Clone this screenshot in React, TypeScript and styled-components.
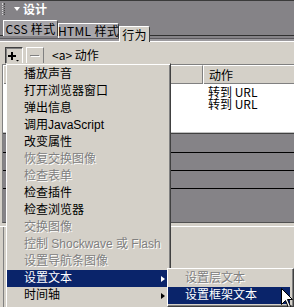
import styled, { createGlobalStyle } from 'styled-components';

type TItemState = 'normal' | 'disabled' | 'active';

interface IMenuItem {
    label: string;
    state?: TItemState;
    sub?: boolean;
}

const MENU_ITEMS: IMenuItem[] = [
    { label: '播放声音' },
    { label: '打开浏览器窗口' },
    { label: '弹出信息' },
    { label: '调用JavaScript' },
    { label: '改变属性' },
    { label: '恢复交换图像', state: 'disabled' },
    { label: '检查表单', state: 'disabled' },
    { label: '检查插件' },
    { label: '检查浏览器' },
    { label: '交换图像', state: 'disabled' },
    { label: '控制 Shockwave 或 Flash', state: 'disabled' },
    { label: '设置导航条图像', state: 'disabled' },
    { label: '设置文本', state: 'active', sub: true },
    { label: '时间轴', sub: true },
];

const SUB_ITEMS: IMenuItem[] = [
    { label: '设置层文本', state: 'disabled' },
    { label: '设置框架文本', state: 'active' },
];

const ACTIONS = ['转到 URL', '转到 URL'];

function App() {
    const renderItems = (items: IMenuItem[]) =>
        items.map(item => {
            const state = item.state || 'normal';
            return (
                <MenuItem key={item.label} $state={state}>
                    <span className="label">{item.label}</span>
                    {item.sub && <SubArrow $state={state} />}
                </MenuItem>
            );
        });

    return (
        <>
            <GlobalStyle />
            <Panel>
                <Header>
                    <TitleRow>
                        <Gripper />
                        <Caret />
                        <Title>设计</Title>
                    </TitleRow>
                    <TabRow>
                        <Tab $top={3} $width={55} $height={16}>
                            CSS 样式
                        </Tab>
                        <Tab $top={6} $width={61} $height={15}>
                            HTML 样式
                        </Tab>
                        <Tab $top={9} $width={31} $height={16} $active>
                            行为
                        </Tab>
                    </TabRow>
                </Header>

                <Toolbar>
                    <ToolButton $pressed>
                        <svg width="16" height="14" viewBox="0 0 16 14">
                            <rect x="2" y="6" width="8" height="2" fill="#000" />
                            <rect x="5" y="3" width="2" height="8" fill="#000" />
                            <path d="M10 11h3l-1.5 1.5z" fill="#000" />
                        </svg>
                    </ToolButton>
                    <ToolButton>
                        <svg width="16" height="14" viewBox="0 0 16 14">
                            <rect x="3" y="6" width="9" height="1" fill="#808080" />
                            <rect x="4" y="7" width="9" height="1" fill="#ffffff" />
                        </svg>
                    </ToolButton>
                    <TagLabel>{'<a> 动作'}</TagLabel>
                </Toolbar>

                <ListBox>
                    <HeaderRow>
                        <span className="cell first" />
                        <span className="cell">动作</span>
                    </HeaderRow>
                    <ListBody>
                        {ACTIONS.map((a, i) => (
                            <ActionRow key={i}>
                                <span />
                                <span className="action">{a}</span>
                            </ActionRow>
                        ))}
                    </ListBody>
                    <DarkArea>
                        <DarkRow />
                        <DarkRow />
                        <DarkRow />
                    </DarkArea>
                </ListBox>

                <Footer>
                    <FooterWell />
                </Footer>

                <Menu>{renderItems(MENU_ITEMS)}</Menu>
                <SubMenu>{renderItems(SUB_ITEMS)}</SubMenu>

                <Cursor width="13" height="20" viewBox="0 0 13 20">
                    <path
                        d="M0.5 0.5 L0.5 16.5 L4.5 12.5 L7.5 19.5 L9.5 18.5 L6.5 11.5 L11.5 11.5 Z"
                        fill="#fff"
                        stroke="#000"
                        strokeWidth="1"
                    />
                </Cursor>
            </Panel>
        </>
    );
}

export default App;

const GlobalStyle = createGlobalStyle`
    html, body {
        margin: 0;
        padding: 0;
        background: #d4d0c8;
    }
`;

const Panel = styled.div`
    position: relative;
    width: 294px;
    height: 307px;
    overflow: hidden;
    display: flex;
    flex-direction: column;
    background: #d4d0c8;
    font-family: "Noto Sans CJK SC", sans-serif;
    font-size: 12px;
    color: #000;
`;

const Header = styled.header`
    background: #858387;
    border-top: 1px solid #3a3a3a;
`;

const TitleRow = styled.div`
    height: 16px;
    display: flex;
    align-items: center;
    padding-left: 2px;
`;

const Gripper = styled.span`
    width: 1px;
    height: 12px;
    border-left: 1px dotted #d8d8d8;
    border-right: 1px dotted #4a4a4a;
`;

const Caret = styled.span`
    width: 0;
    height: 0;
    margin-left: 9px;
    border-left: 3.5px solid transparent;
    border-right: 3.5px solid transparent;
    border-top: 4px solid #fff;
`;

const Title = styled.span`
    margin-left: 3px;
    color: #fff;
    font-weight: bold;
    line-height: 16px;
`;

const TabRow = styled.div`
    height: 25px;
    display: flex;
    align-items: flex-start;
    padding-left: 3px;
    background: linear-gradient(
        to bottom,
        transparent 0 18px,
        #303030 18px 19px,
        #858387 19px 21px,
        #5c5a5e 21px 22px,
        #9c9a9e 22px 24px,
        #ffffff 24px 25px
    );
`;

const Tab = styled.div<{ $top: number; $width: number; $height: number; $active?: boolean }>`
    box-sizing: border-box;
    margin-top: ${p => p.$top}px;
    width: ${p => p.$width}px;
    height: ${p => p.$height}px;
    display: flex;
    align-items: center;
    justify-content: center;
    white-space: nowrap;
    line-height: 14px;
    letter-spacing: 0.3px;
    background: ${p => (p.$active ? '#d4d0c8' : '#a8a6aa')};
    border-top: 1px solid #fff;
    border-left: 1px solid #fff;
    border-right: 1px solid #404040;
    border-top-right-radius: 2px;
    color: #000;
`;

const Toolbar = styled.div`
    height: 21px;
    display: flex;
    align-items: flex-start;
    padding: 5px 0 0 5px;
    box-sizing: border-box;
`;

const ToolButton = styled.div<{ $pressed?: boolean }>`
    box-sizing: border-box;
    width: 18px;
    height: 17px;
    margin-right: 3px;
    display: flex;
    align-items: center;
    justify-content: center;
    border: 1px solid;
    border-color: ${p => (p.$pressed ? '#404040 #fff #fff #404040' : '#fff #808080 #808080 #fff')};
    box-shadow: ${p => (p.$pressed ? 'inset 1px 1px 0 #808080' : 'none')};
`;

const TagLabel = styled.span`
    margin-left: 5px;
    line-height: 16px;
    white-space: nowrap;
`;

const ListBox = styled.div`
    margin: 1px 0 0 2px;
    height: 159px;
    box-sizing: border-box;
    display: flex;
    flex-direction: column;
    border-top: 1px solid #808080;
    border-left: 1px solid #808080;
    border-bottom: 1px solid #505050;
`;

const HeaderRow = styled.div`
    height: 19px;
    box-sizing: border-box;
    display: grid;
    grid-template-columns: 200px 1fr;
    border-bottom: 1px solid #808080;

    .cell {
        line-height: 18px;
        padding-left: 5px;
        border-top: 1px solid #fff;
        border-left: 1px solid #fff;
    }

    .first {
        border-right: 1px solid #808080;
    }
`;

const ListBody = styled.div`
    height: 49px;
    padding-top: 2px;
    box-sizing: border-box;
    background: #fff;
    border-bottom: 1px solid #c0c0c0;
`;

const ActionRow = styled.div`
    display: grid;
    grid-template-columns: 200px 1fr;
    height: 12px;
    line-height: 12px;

    .action {
        padding-left: 5px;
        white-space: nowrap;
    }
`;

const DarkArea = styled.div`
    flex: 1;
    background: #858387;
    border-top: 1px solid #404040;
    padding-top: 1px;
`;

const DarkRow = styled.div`
    height: 17px;
    border-bottom: 1px solid #000;
`;

const Footer = styled.div`
    flex: 1;
    margin-top: 3px;
    border-top: 1px solid #fff;
    display: flex;
`;

const FooterWell = styled.div`
    margin-left: 3px;
    border-left: 1px solid #808080;
`;

const Menu = styled.div`
    position: absolute;
    left: 6px;
    top: 63px;
    width: 165px;
    bottom: -10px;
    box-sizing: border-box;
    background: #d4d0c8;
    border-top: 1px solid #d4d0c8;
    border-left: 1px solid #fff;
    border-right: 1px solid #404040;
    box-shadow: inset 0 1px 0 #fff, inset -1px 0 0 #808080;
    padding: 2px 3px 0 0;
    font-family: "Liberation Sans", "Noto Sans CJK SC", sans-serif;
`;

const SubMenu = styled.div`
    position: absolute;
    left: 167px;
    top: 268px;
    width: 127px;
    box-sizing: border-box;
    background: #d4d0c8;
    border-top: 1px solid #fff;
    border-left: 1px solid #fff;
    border-right: 1px solid #404040;
    border-bottom: 1px solid #404040;
    box-shadow: inset -1px -1px 0 #808080;
    padding: 1px 3px 2px 0;
    font-family: "Liberation Sans", "Noto Sans CJK SC", sans-serif;
`;

const MenuItem = styled.div<{ $state: TItemState }>`
    height: 17px;
    display: flex;
    align-items: center;
    padding-left: 17px;
    white-space: nowrap;
    background: ${p => (p.$state === 'active' ? '#0a246a' : 'transparent')};
    color: ${p => (p.$state === 'active' ? '#fff' : p.$state === 'disabled' ? '#808080' : '#000')};
    text-shadow: ${p => (p.$state === 'disabled' ? '1px 1px 0 #fff' : 'none')};

    .label {
        flex: 1;
        line-height: 17px;
    }
`;

const SubArrow = styled.span<{ $state: TItemState }>`
    width: 0;
    height: 0;
    margin-right: 2px;
    border-top: 3.5px solid transparent;
    border-bottom: 3.5px solid transparent;
    border-left: 4px solid ${p => (p.$state === 'active' ? '#fff' : '#000')};
`;

const Cursor = styled.svg`
    position: absolute;
    left: 281px;
    top: 288px;
`;
